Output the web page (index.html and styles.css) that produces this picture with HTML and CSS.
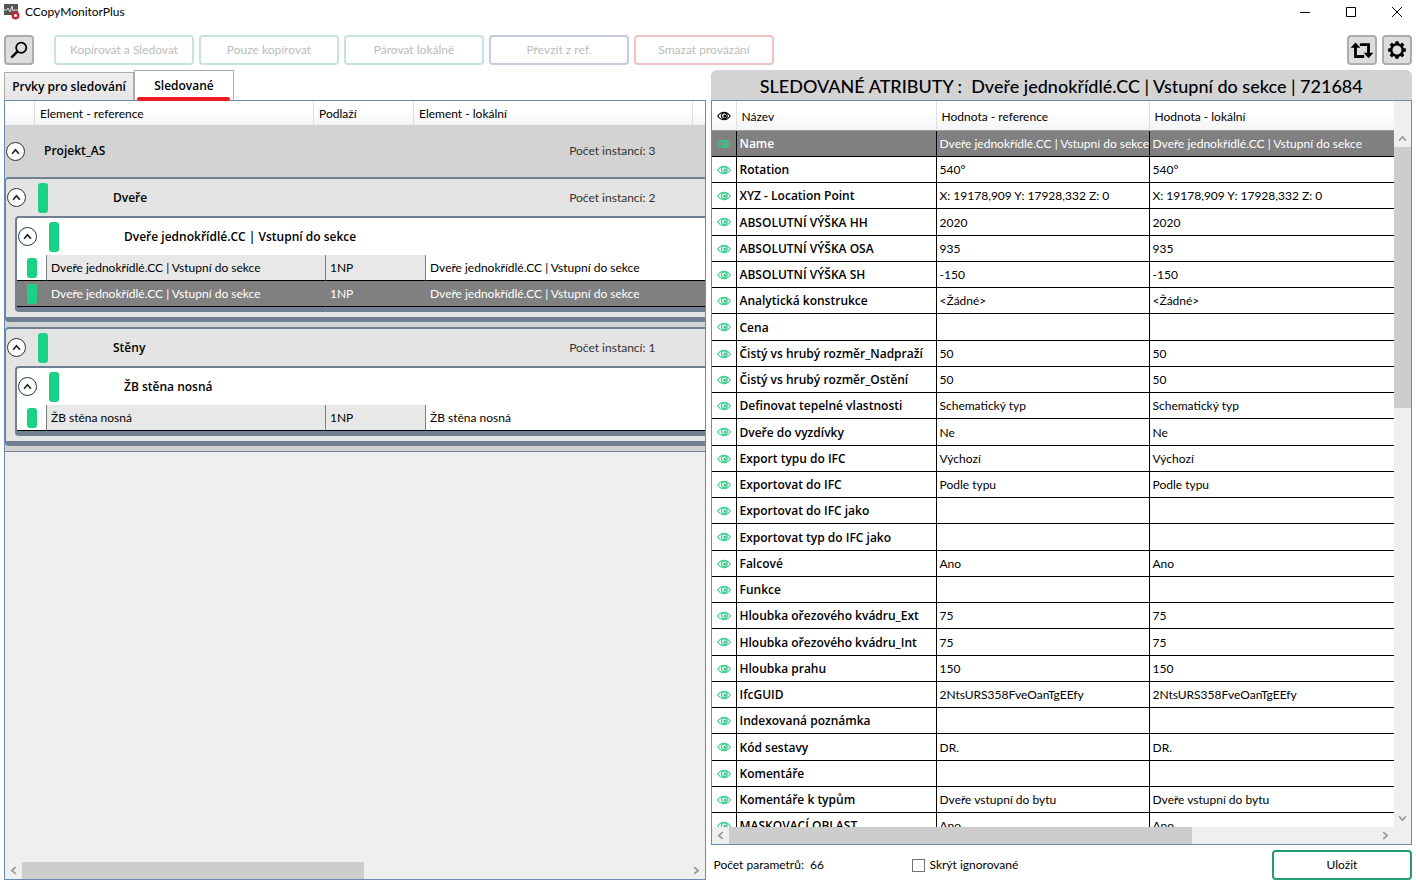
FILE: index.html
```html
<!DOCTYPE html>
<html lang="cs">
<head>
  <meta charset="utf-8">
  <title>CCopyMonitorPlus</title>
  <link rel="stylesheet" href="styles.css">
</head>
<body>

<svg class="sprite" aria-hidden="true">
  <symbol id="eye" viewBox="0 0 14 10">
    <path d="M.7 5C3 1.800 5 1.200 7 1.200S11 1.800 13.300 5C11 8.200 9 8.800 7 8.800S3 8.200 .7 5z" fill="none" stroke="currentColor" stroke-width="1.100"/>
    <circle cx="7.300" cy="4.800" r="2.900" fill="none" stroke="currentColor" stroke-width="1.200"/>
    <circle cx="7.800" cy="5" r="1.500" fill="currentColor"/>
  </symbol>
  <symbol id="arrow" viewBox="0 0 8 8">
    <path d="M1 6l3-3.500L7 6" fill="none" stroke="currentColor" stroke-width="1.500"/>
  </symbol>
</svg>

<header class="titlebar">
  <svg class="app-icon" viewBox="0 0 16 16">
    <rect width="14" height="11" fill="#555"/>
    <path d="M0 6h3l1-2 2 4 2-6 1 5 1-1h4" fill="none" stroke="#ddd"/>
    <circle cx="11.500" cy="11.500" r="4" fill="#c8283c"/>
    <circle cx="11.500" cy="11.500" r="1.500" fill="#fff"/>
  </svg>
  <span class="app-name">CCopyMonitorPlus</span>
  <button class="win-btn" aria-label="Minimalizovat"><svg viewBox="0 0 12 12"><path d="M1 6.500h10"/></svg></button>
  <button class="win-btn" aria-label="Maximalizovat"><svg viewBox="0 0 12 12"><path d="M1.500 1.500h9v9h-9z"/></svg></button>
  <button class="win-btn" aria-label="Zavřít"><svg viewBox="0 0 12 12"><path d="M1 1l10 10M11 1L1 11"/></svg></button>
</header>

<div class="toolbar">
  <button class="icon-btn search" aria-label="Hledat">
    <svg viewBox="0 0 20 20"><circle cx="12" cy="8" r="4.600" fill="none" stroke="#000" stroke-width="1.600"/><path d="M8.500 11.500L3 17" stroke="#000" stroke-width="2.200"/></svg>
  </button>
  <button class="btn green" disabled>Kopírovat a Sledovat</button>
  <button class="btn green" disabled>Pouze kopírovat</button>
  <button class="btn green" disabled>Párovat lokálně</button>
  <button class="btn blue" disabled>Převzít z ref.</button>
  <button class="btn red" disabled>Smazat provázání</button>
  <button class="icon-btn refresh" aria-label="Obnovit">
    <svg viewBox="0 0 24 20"><path d="M6 6v10h8M10 5h8v9" fill="none" stroke="#000" stroke-width="2.600"/><path d="M1.500 8L6 3l4.500 5zM13.500 12.500L18 17.500l4.500-5z"/></svg>
  </button>
  <button class="icon-btn" aria-label="Nastavení">
    <svg viewBox="0 0 20 20"><circle cx="10" cy="10" r="5.200" fill="none" stroke="#000" stroke-width="2.200"/><path d="M10 2v3M10 15v3M2 10h3M15 10h3M4.300 4.300l2 2M13.700 13.700l2 2M4.300 15.700l2-2M13.700 6.300l2-2" stroke="#000" stroke-width="3"/></svg>
  </button>
</div>

<main class="panels">
  <section class="left">
    <div class="tabs">
      <button class="tab">Prvky pro sledování</button>
      <button class="tab active">Sledované</button>
    </div>
    <div class="frame tree">
      <div class="tree-head">
        <span></span><span>Element - reference</span><span>Podlaží</span><span>Element - lokální</span><span></span>
      </div>

      <div class="project">
        <div class="group-head">
          <button class="expander" aria-label="Sbalit"><svg><use href="#arrow"/></svg></button>
          <b class="project-name">Projekt_AS</b>
          <span class="count">Počet instancí: 3</span>
        </div>

        <div class="category">
          <div class="group-head">
            <button class="expander" aria-label="Sbalit"><svg><use href="#arrow"/></svg></button>
            <i class="status tall"></i>
            <b>Dveře</b>
            <span class="count">Počet instancí: 2</span>
          </div>
          <div class="type">
            <div class="group-head">
              <button class="expander" aria-label="Sbalit"><svg><use href="#arrow"/></svg></button>
              <i class="status tall"></i>
              <b>Dveře jednokřídlé.CC | Vstupní do sekce</b>
            </div>
            <table class="items">
              <tr><td><i class="status"></i></td><td>Dveře jednokřídlé.CC | Vstupní do sekce</td><td>1NP</td><td>Dveře jednokřídlé.CC | Vstupní do sekce</td></tr>
              <tr class="selected"><td><i class="status"></i></td><td>Dveře jednokřídlé.CC | Vstupní do sekce</td><td>1NP</td><td>Dveře jednokřídlé.CC | Vstupní do sekce</td></tr>
            </table>
          </div>
        </div>

        <div class="category">
          <div class="group-head">
            <button class="expander" aria-label="Sbalit"><svg><use href="#arrow"/></svg></button>
            <i class="status tall"></i>
            <b>Stěny</b>
            <span class="count">Počet instancí: 1</span>
          </div>
          <div class="type">
            <div class="group-head">
              <button class="expander" aria-label="Sbalit"><svg><use href="#arrow"/></svg></button>
              <i class="status tall"></i>
              <b>ŽB stěna nosná</b>
            </div>
            <table class="items">
              <tr><td><i class="status"></i></td><td>ŽB stěna nosná</td><td>1NP</td><td>ŽB stěna nosná</td></tr>
            </table>
          </div>
        </div>
      </div>

      <div class="hscroll">
        <svg class="turn-left"><use href="#arrow"/></svg>
        <div class="track"><div class="thumb half"></div></div>
        <svg class="turn-right"><use href="#arrow"/></svg>
      </div>
    </div>
  </section>

  <section class="right">
    <h1>SLEDOVANÉ ATRIBUTY :&nbsp; Dveře jednokřídlé.CC | Vstupní do sekce | 721684</h1>
    <div class="frame attributes">
      <div class="grid-area">
        <div class="table-clip">
          <table class="params">
            <thead>
              <tr><th><svg class="eye"><use href="#eye"/></svg></th><th>Název</th><th>Hodnota - reference</th><th>Hodnota - lokální</th></tr>
            </thead>
            <tbody id="params"></tbody>
          </table>
        </div>
        <div class="vscroll">
          <svg><use href="#arrow"/></svg>
          <div class="track"><div class="thumb"></div></div>
          <svg class="turn-down"><use href="#arrow"/></svg>
        </div>
      </div>
      <div class="hscroll beside-vscroll">
        <svg class="turn-left"><use href="#arrow"/></svg>
        <div class="track"><div class="thumb wide"></div></div>
        <svg class="turn-right"><use href="#arrow"/></svg>
      </div>
    </div>
    <div class="footer">
      <span>Počet parametrů:&nbsp; 66</span>
      <label class="check"><input type="checkbox"> Skrýt ignorované</label>
      <button class="btn save">Uložit</button>
    </div>
  </section>
</main>

<script src="script.js"></script>
</body>
</html>
```

FILE: styles.css
```css
* {
  box-sizing: border-box;
}

body {
  margin: 0;
  height: 100vh;
  display: flex;
  flex-direction: column;
  overflow: hidden;
  background: #fff;
  color: #000;
  font: 12px/16px Lato, "Open Sans", sans-serif;
}

button {
  padding: 0;
  font: inherit;
  color: inherit;
}

.sprite {
  position: absolute;
  width: 0;
  height: 0;
}

/* title bar */
.titlebar {
  display: flex;
  align-items: center;
  height: 23px;
  padding-left: 4px;
}

.app-icon {
  width: 16px;
  height: 16px;
  margin-right: 5px;
}

.app-name {
  flex: 1;
}

.win-btn {
  width: 46px;
  height: 23px;
  border: none;
  background: none;
}

.win-btn:last-child {
  margin-right: -4px;
}

.win-btn svg {
  display: block;
  width: 12px;
  height: 12px;
  margin: 0 auto;
  fill: none;
  stroke: #000;
}

/* toolbar */
.toolbar {
  display: flex;
  gap: 5px;
  padding: 12px 4px 5px;
}

.icon-btn {
  width: 30px;
  height: 30px;
  border: 2px solid #adadad;
  border-radius: 4px;
  background: #ddd;
}

.icon-btn svg {
  display: block;
  width: 100%;
  height: 22px;
}

.search {
  margin-right: 15px;
}

.refresh {
  margin-left: auto;
}

.btn {
  width: 140px;
  height: 30px;
  border: 2px solid;
  border-radius: 4px;
  background: #fff;
}

.btn:disabled {
  color: #bcbcbc;
}

.btn.green {
  border-color: #c6e5da;
}

.btn.blue {
  border-color: #c3cddb;
}

.btn.red {
  border-color: #efc2c2;
}

/* panels */
.panels {
  flex: 1;
  min-height: 0;
  display: grid;
  grid-template-columns: 1fr 1fr;
  gap: 5px;
  padding: 0 4px 4px;
}

.left,
.right {
  display: flex;
  flex-direction: column;
  min-width: 0;
  min-height: 0;
}

.frame {
  flex: 1;
  min-height: 0;
  display: flex;
  flex-direction: column;
  border: 1px solid #688caf;
  overflow: hidden;
}

.tabs {
  display: flex;
  align-items: flex-end;
  height: 30px;
}

.tab {
  height: 28px;
  width: 130px;
  border: 1px solid #acacac;
  border-bottom: none;
  background: linear-gradient(#f0f0f0, #e5e5e5);
}

.tab,
.group-head b,
.params td:nth-child(2) {
  font-family: "Open Sans", sans-serif;
  font-weight: 600;
}

.tab.active {
  position: relative;
  width: 100px;
  height: 30px;
  background: #fff;
}

.tab.active::after {
  content: "";
  position: absolute;
  left: 2px;
  right: 3px;
  bottom: -1px;
  height: 4px;
  border-radius: 2px;
  background: #ed1c24;
}

/* tree of tracked elements */
.tree {
  background: #efefef;
}

.tree-head {
  display: grid;
  grid-template-columns: 30px 279px 100px 279px 1fr;
  height: 24px;
  background: linear-gradient(#fff 40%, #f3f4f6);
}

.tree-head span {
  padding: 5px;
  border-right: 1px solid #dedfe1;
}

.tree-head span:last-child {
  border-right: none;
}

.project {
  display: flex;
  flex-direction: column;
  gap: 5px;
  padding-bottom: 5px;
  border-bottom: 1px solid #708090;
  background: #d3d3d3;
}

.project > .group-head {
  height: 52px;
  margin-bottom: -5px;
}

.group-head {
  display: flex;
  align-items: center;
  height: 37px;
  padding-right: 49px;
}

.group-head b {
  flex: 1;
  margin-left: 65px;
}

.group-head .project-name {
  margin-left: 18px;
}

.count {
  color: #333;
}

.expander {
  display: grid;
  place-items: center;
  width: 19px;
  height: 19px;
  margin: 0 1px;
  border: 1px solid #333;
  border-radius: 50%;
  background: #fff;
}

.expander svg {
  width: 9px;
  height: 9px;
  color: #222;
}

.category {
  padding: 0 0 5px 9px;
  border: 2px solid #708090;
  border-width: 2px 0 5px 1px;
  border-radius: 4px 0 0 4px;
  background: #e4e4e4;
}

.category > .group-head {
  margin-left: -9px;
}

.type {
  border: 2px solid #708090;
  border-width: 2px 0 5px 2px;
  border-radius: 4px 0 0 4px;
  background: #fff;
}

.status {
  display: block;
  width: 10px;
  height: 20px;
  margin: 0 auto;
  border-radius: 3px;
  background: #1bd186;
}

.status.tall {
  height: 30px;
  margin: 0 0 0 11px;
}

.items {
  width: 100%;
  table-layout: fixed;
  border-collapse: separate;
  border-spacing: 0;
}

.items td {
  height: 26px;
  padding: 0 4px;
  border-bottom: 1px solid #000;
  white-space: nowrap;
}

.items td:nth-child(1) {
  width: 29px;
  padding: 0;
}

.items td:nth-child(2) {
  width: 279px;
}

.items td:nth-child(3) {
  width: 100px;
}

.items td:nth-child(n+2) {
  border-left: 1px solid #808080;
}

.items td:nth-child(2),
.items td:nth-child(3) {
  background: #e8e8e8;
}

.items .selected td {
  background: #808080;
  color: #fff;
}

/* scroll bars */
.hscroll,
.vscroll {
  display: flex;
  align-items: center;
  background: #efefef;
  color: #999;
}

.hscroll {
  height: 17px;
  margin-top: auto;
}

.hscroll svg,
.vscroll svg {
  width: 9px;
  height: 9px;
  margin: 4px;
}

.beside-vscroll {
  padding-right: 17px;
}

.vscroll {
  flex-direction: column;
  width: 17px;
  padding-top: 29px;
}

.track {
  flex: 1;
}

.hscroll .track {
  height: 17px;
}

.vscroll .track {
  width: 17px;
}

.thumb {
  height: 39.4%;
  background: #cdcdcd;
}

.thumb.half {
  width: 51.4%;
  height: 100%;
}

.thumb.wide {
  width: 71.4%;
  height: 100%;
}

.turn-left {
  transform: rotate(-90deg);
}

.turn-right {
  transform: rotate(90deg);
}

.turn-down {
  transform: rotate(180deg);
}

/* attributes */
h1 {
  height: 30px;
  margin: 0;
  border-radius: 6px 6px 0 0;
  background: #d3d3d3;
  font-size: 18px;
  font-weight: 500;
  line-height: 32px;
  text-align: center;
  white-space: nowrap;
}

.grid-area {
  flex: 1;
  min-height: 0;
  display: flex;
}

.table-clip {
  flex: 1;
  min-width: 0;
  overflow: hidden;
}

.params {
  width: 100%;
  table-layout: fixed;
  border-collapse: separate;
  border-spacing: 0;
}

.params th {
  height: 30px;
  padding: 2px 5px 0;
  border-right: 1px solid #dedfe1;
  border-bottom: 1px solid #a0a0a0;
  background: linear-gradient(#fff 40%, #f3f4f6);
  font-weight: normal;
  text-align: left;
}

.params th:nth-child(1) {
  width: 25px;
}

.params th:nth-child(2) {
  width: 200px;
}

.params th:nth-child(3) {
  width: 213px;
}

.params th:last-child,
.params td:last-child {
  border-right: none;
}

.params td {
  height: 26px;
  padding: 1px 0 0 3px;
  border-right: 1px solid #000;
  border-bottom: 1px solid #000;
  overflow: hidden;
  white-space: nowrap;
}

.params tr:nth-child(4n) td {
  height: 27px;
}

.params td:first-child,
.params th:first-child {
  padding: 0;
  text-align: center;
}

.params .selected td {
  background: #808080;
  color: #fff;
}

.eye {
  display: block;
  width: 14px;
  height: 10px;
  margin: 0 auto;
}

.params td .eye {
  color: #35cc8c;
}

.footer {
  display: flex;
  align-items: center;
  height: 35px;
  padding: 5px 0 0 3px;
}

.footer > span {
  width: 198px;
}

.check {
  display: flex;
  align-items: center;
  gap: 5px;
}

.check input {
  appearance: none;
  width: 13px;
  height: 13px;
  margin: 0;
  border: 1px solid #707070;
  background: #fff;
}

.save {
  margin-left: auto;
  border-color: #249b74;
}
```

FILE: script.js
```js
// name, reference value, local value (same as reference when left out)
const params = [
  ["Name", "Dveře jednokřídlé.CC | Vstupní do sekce"],
  ["Rotation", "540°"],
  ["XYZ - Location Point", "X: 19178,909 Y: 17928,332 Z: 0"],
  ["ABSOLUTNÍ VÝŠKA HH", "2020"],
  ["ABSOLUTNÍ VÝŠKA OSA", "935"],
  ["ABSOLUTNÍ VÝŠKA SH", "-150"],
  ["Analytická konstrukce", "<Žádné>"],
  ["Cena", ""],
  ["Čistý vs hrubý rozměr_Nadpraží", "50"],
  ["Čistý vs hrubý rozměr_Ostění", "50"],
  ["Definovat tepelné vlastnosti", "Schematický typ"],
  ["Dveře do vyzdívky", "Ne"],
  ["Export typu do IFC", "Výchozí"],
  ["Exportovat do IFC", "Podle typu"],
  ["Exportovat do IFC jako", ""],
  ["Exportovat typ do IFC jako", ""],
  ["Falcové", "Ano"],
  ["Funkce", ""],
  ["Hloubka ořezového kvádru_Ext", "75"],
  ["Hloubka ořezového kvádru_Int", "75"],
  ["Hloubka prahu", "150"],
  ["IfcGUID", "2NtsURS358FveOanTgEEfy"],
  ["Indexovaná poznámka", ""],
  ["Kód sestavy", "DR."],
  ["Komentáře", ""],
  ["Komentáře k typům", "Dveře vstupní do bytu"],
  ["MASKOVACÍ OBLAST", "Ano"]
];

const body = document.getElementById("params");

params.forEach(function([name, reference, local = reference], i) {
  const row = body.insertRow();
  if (i === 0) row.className = "selected";
  row.insertCell().innerHTML = '<svg class="eye"><use href="#eye"/></svg>';
  row.insertCell().textContent = name;
  row.insertCell().textContent = reference;
  row.insertCell().textContent = local;
});
```
